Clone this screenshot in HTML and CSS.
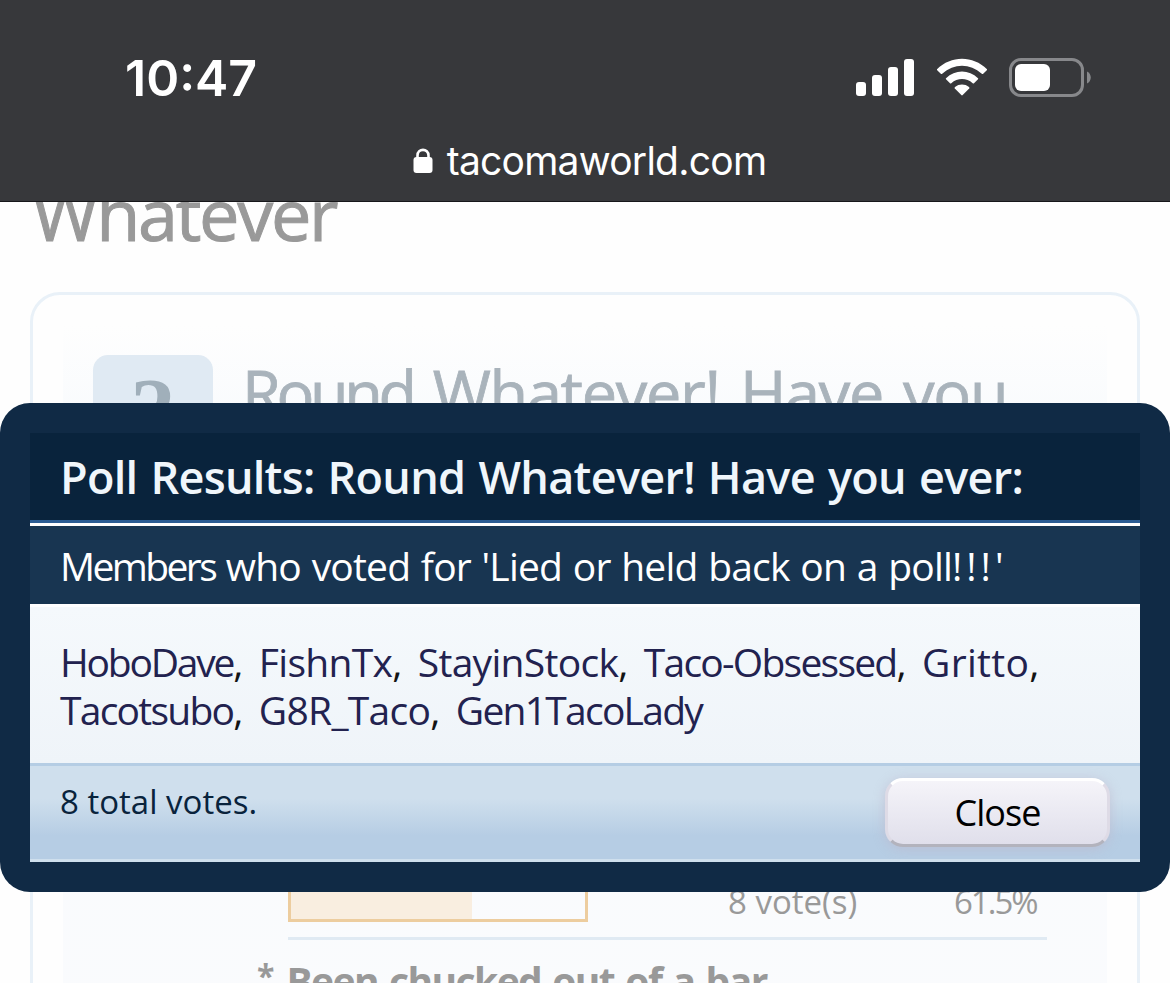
FILE: index.html
```
<!DOCTYPE html>
<html lang="en">

<head>
    <meta charset="UTF-8">
    <meta name="viewport" content="width=device-width, initial-scale=1.0">
    <title>Poll Results</title>
    <link rel="stylesheet" href="styles.css">
</head>

<body>

    <!-- Phone status bar and address -->
    <header class="browserBar">
        <div class="statusBar">
            <span class="clock">10:47</span>
            <div class="statusIcons">
                <svg class="signalIcon" width="58" height="38" viewBox="0 0 58 38" fill="#fff">
                    <rect x="0" y="24" width="10" height="14" rx="3" />
                    <rect x="16" y="17" width="10" height="21" rx="3" />
                    <rect x="32" y="9" width="10" height="29" rx="3" />
                    <rect x="48" y="1" width="10" height="37" rx="3" />
                </svg>
                <svg class="wifiIcon" width="52" height="38" viewBox="0 -0.7 52 38" fill="#fff">
                    <path d="M1 10.5C15-3.5 37-3.5 51 10.5Q51.300 11 50.800 11.600L47.200 15Q46.500 15.600 45.800 15C34 4.300 18 4.300 6.200 15Q5.500 15.600 4.800 15L1.200 11.600Q.7 11 1 10.500Z" />
                    <path d="M10 19.500C19 10.500 33 10.500 42 19.500Q42.500 20 42 20.600L38 24.500Q37.300 25 36.700 24.500C30.500 19 21.500 19 15.300 24.500Q14.700 25 14 24.500L10 20.600Q9.500 20 10 19.500Z" />
                    <path d="M19 28.300C23 25 29 25 33 28.300Q33.800 29 33.200 29.700L26.700 36.400Q26 37.100 25.300 36.400L18.800 29.700Q18.200 29 19 28.300Z" />
                </svg>
                <svg class="batteryIcon" width="82" height="39" viewBox="0 0 82 39">
                    <rect x="1.500" y="1.500" width="72" height="36" rx="10.500" fill="none" stroke="#87888b" stroke-width="3" />
                    <rect x="6" y="6" width="35" height="27" rx="6" fill="#fff" />
                    <path d="M78 13.500C83 15.500 83 23.500 78 25.500Z" fill="#87888b" />
                </svg>
            </div>
        </div>
        <div class="addressBar">
            <svg class="lockIcon" width="20" height="26" viewBox="0 0 20 26">
                <path d="M4.500 11V7.500C4.500 0 15.500 0 15.500 7.500V11" fill="none" stroke="#fff" stroke-width="2.600" />
                <rect x="0.500" y="9" width="19" height="16" rx="3" fill="#fff" />
            </svg>
            <span class="address">tacomaworld.com</span>
        </div>
    </header>

    <main class="page">
        <h1 class="threadTitle">Whatever</h1>

        <section class="pollCard">
            <div class="pollInner">
                <div class="pollHead">
                    <div class="questionMark">?</div>
                    <h2 class="question"><span class="tight">Round</span> Whatever! Have you</h2>
                </div>
                <div class="pollOption">
                    <div class="pollBar"><div class="pollFill"></div></div>
                    <span class="voteCount">8 vote(s)</span>
                    <span class="votePercent">61.5%</span>
                </div>
                <div class="pollLabel">
                    <span class="star">*</span>
                    <strong class="optionName">Been chucked out of a bar</strong>
                </div>
            </div>
        </section>

        <!-- Results overlay -->
        <div class="overlay">
            <h2 class="overlayTitle">Poll Results: Round Whatever! Have you ever:</h2>
            <h3 class="overlaySub"><span class="tight">Members</span> who voted for 'Lied or held back on a poll<span class="loose">!!!</span>'</h3>
            <div class="members">
                <div class="memberLine"><a class="tighter">HoboDave</a>, <a>FishnTx</a>, <a>StayinStock</a>, <a class="tight">Taco-Obsessed</a>, <a class="loose">Gritto</a>,</div>
                <div class="memberLine"><a class="tight">Tacotsubo</a>, <a>G8R_Taco</a>, <a class="tight">Gen1TacoLady</a></div>
            </div>
            <div class="overlayFooter">
                <span class="total">8 total votes.</span>
                <button class="closeButton">Close</button>
            </div>
        </div>
    </main>

</body>

</html>
```
FILE: styles.css
```
* {
    box-sizing: border-box;
}

body {
    margin: 0;
    height: 983px;
    overflow: hidden;
    background-color: #fefefe;
    font-family: 'Trebuchet MS', 'Open Sans', sans-serif;
    white-space: nowrap;
}

h1,
h2,
h3 {
    margin: 0;
    font-weight: normal;
}

.browserBar {
    height: 202px;
    background-color: #37383b;
    border-bottom: 1px solid #17171a;
    color: #fff;
    font-family: Inter, sans-serif;
}

.statusBar {
    display: flex;
    justify-content: space-between;
    align-items: flex-start;
    height: 130px;
    padding: 48px 79px 0 125px;
}

.clock {
    font-size: 50px;
    font-weight: 600;
    line-height: 60px;
}

.statusIcons {
    display: flex;
    gap: 21.5px;
    padding-top: 10px;
}

.addressBar {
    display: flex;
    justify-content: center;
    align-items: center;
    gap: 14px;
    height: 62px;
    padding-left: 9px;
}

.address {
    font-size: 39px;
    line-height: 48px;
    letter-spacing: -0.75px;
}

.page {
    position: relative;
    height: 781px;
    overflow: hidden;
}

.threadTitle {
    height: 90px;
    padding-left: 32px;
    font-size: 72px;
    line-height: 84px;
    letter-spacing: -2.3px;
    margin-top: -31px;
    color: #999;
    -webkit-text-stroke: 1px #999;
}

.pollCard {
    height: 900px;
    margin: 31px 30px 0;
    padding: 30px;
    border: 3px solid #e9f1f8;
    border-radius: 30px;
}

.pollInner {
    height: 840px;
    padding: 30px 60px 0 30px;
    background: linear-gradient(#fefefe, #f9fbfd 90px, #fafbfd);
}

.pollHead {
    display: flex;
    gap: 29px;
    height: 523px;
}

.questionMark {
    width: 120px;
    height: 120px;
    border-radius: 15px;
    background-color: #e0eaf3;
    color: #a0afba;
    font: bold 90px/112px 'Liberation Serif', serif;
    text-align: center;
}

.question {
    font-size: 63px;
    line-height: 74px;
    letter-spacing: -1.3px;
    word-spacing: 5px;
    color: #a9b3bb;
    -webkit-text-stroke: 0.8px #a9b3bb;
}

.question .tight {
    letter-spacing: -4.4px;
}

.pollOption {
    display: flex;
    height: 62px;
    margin-left: 195px;
    border-bottom: 3px solid #e0eaf3;
    color: #999;
    font-size: 33px;
    line-height: 48px;
}

.pollBar {
    width: 300px;
    height: 44px;
    border: 3px solid #edcd9f;
}

.pollFill {
    width: 181px;
    height: 100%;
    background-color: #f9eee0;
}

.voteCount {
    width: 226px;
    margin-left: 140px;
}

.votePercent {
    letter-spacing: -2px;
}

.pollLabel {
    display: flex;
    gap: 12px;
    padding: 14px 0 0 164px;
    font-size: 39px;
    line-height: 54px;
    color: #999;
}

.star {
    font-size: 32px;
    font-weight: bold;
    line-height: 44px;
}

.optionName {
    letter-spacing: -1.6px;
    word-spacing: 2.6px;
}

.overlay {
    position: absolute;
    top: 201px;
    left: 0;
    width: 1170px;
    height: 489px;
    padding: 30px;
    border-radius: 30px;
    background-color: #102a45;
}

.overlayTitle {
    height: 90px;
    padding-left: 30px;
    background-color: #09233c;
    border-bottom: 3px solid #2b5c93;
    color: #f0f6fb;
    font-size: 45px;
    font-weight: 600;
    line-height: 88px;
    letter-spacing: -0.7px;
    word-spacing: 2px;
}

.overlaySub {
    height: 81px;
    padding-left: 30px;
    border-top: 3px solid #fff;
    background-color: #183551;
    color: #fff;
    font-size: 39px;
    line-height: 80px;
    letter-spacing: -0.8px;
    word-spacing: 1.3px;
}

.overlaySub .tight {
    letter-spacing: -2.6px;
}

.overlaySub .loose {
    letter-spacing: 4px;
}

.members {
    height: 159px;
    padding: 31px 30px 0;
    border-top: 3px solid #fff;
    background: linear-gradient(#f5f9fc, #eff4f9);
    color: #141414;
    font-size: 39px;
    line-height: 48px;
    word-spacing: 5.3px;
}

.members a {
    color: #22224f;
    letter-spacing: -0.7px;
}

.members .tight {
    letter-spacing: -1.75px;
}

.members .tighter {
    letter-spacing: -2.2px;
}

.members .loose {
    letter-spacing: 0.3px;
}

.overlayFooter {
    display: flex;
    justify-content: space-between;
    height: 99px;
    padding: 12px 30px 0;
    border-top: 3px solid #b5cde4;
    border-bottom: 3px solid #cfdfed;
    background: linear-gradient(#cfdfed 35%, #b6cde4 75%);
}

.total {
    color: #09233c;
    font-size: 33px;
    line-height: 48px;
}

.closeButton {
    width: 225px;
    height: 69px;
    padding: 0;
    border: 3px solid;
    border-color: #fff #dedbe6 #b3b3bd;
    border-radius: 18px;
    background: linear-gradient(#f5f4f9, #e0dfeb);
    box-shadow: 0 2px 12px rgba(190, 185, 205, 0.7);
    color: #000;
    font-family: inherit;
    font-size: 36px;
    line-height: 60px;
    letter-spacing: -1px;
}
```
